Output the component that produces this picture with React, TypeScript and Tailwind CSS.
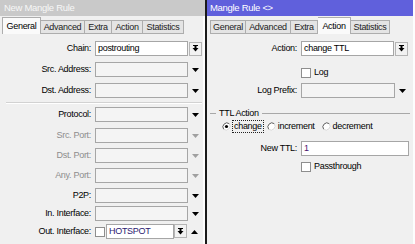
import React from 'react';

const TEXT = "font-['Liberation_Sans',Arial,sans-serif] text-[9px] tracking-[-0.3px] leading-none";

type Tab = { name: string; w: number };

const LEFT_TABS: Tab[] = [
  { name: 'General', w: 39 },
  { name: 'Advanced', w: 44 },
  { name: 'Extra', w: 27 },
  { name: 'Action', w: 31 },
  { name: 'Statistics', w: 41 },
];

const RIGHT_TABS: Tab[] = [
  { name: 'General', w: 36 },
  { name: 'Advanced', w: 45 },
  { name: 'Extra', w: 27 },
  { name: 'Action', w: 33 },
  { name: 'Statistics', w: 39 },
];

const Tabs: React.FC<{ tabs: Tab[]; active: string; left: number }> = ({ tabs, active, left }) => (
  <div className="flex items-end h-[18px]" style={{ paddingLeft: left }}>
    {tabs.map((t, i) => {
      const on = t.name === active;
      return (
        <div
          key={t.name}
          style={{ width: t.w }}
          className={`flex items-center justify-center border-t border-r border-[#adadad] ${i === 0 ? 'border-l' : ''} ${
            on ? 'h-[17px] bg-[#fafafa] text-black' : 'h-[14px] bg-[#e4e4e4] border-b text-[#222]'
          }`}
        >
          {t.name}
        </div>
      );
    })}
  </div>
);

// combo button: bar above a down arrow
const DropBtn = () => (
  <div className="w-[13px] h-[14px] border border-[#b5b5b5] bg-[#f2f2f2] flex items-center justify-center">
    <svg width="7" height="7" viewBox="0 0 7 7">
      <rect x="1" y="0" width="5" height="1" fill="#000" />
      <rect x="2.5" y="1" width="2" height="2" fill="#000" />
      <path d="M0.5 3h6L3.5 6.5z" fill="#000" />
    </svg>
  </div>
);

const Tri: React.FC<{ up?: boolean; gray?: boolean }> = ({ up, gray }) => (
  <svg width="7" height="4" viewBox="0 0 7 4">
    <path d={up ? 'M0 4h7L3.5 0z' : 'M0 0h7L3.5 4z'} fill={gray ? '#a0a0a0' : '#000'} />
  </svg>
);

const Check = () => <div className="w-[10px] h-[10px] border border-[#8e8e8e] bg-white shrink-0" />;

const Radio: React.FC<{ on?: boolean }> = ({ on }) => (
  <svg width="9" height="9" viewBox="0 0 9 9" className="shrink-0">
    <circle cx="4.5" cy="4.5" r="4" fill="#fff" />
    <path d="M1.7 7.3A4 4 0 0 1 7.3 1.7" stroke="#5a5a5a" fill="none" />
    <path d="M7.3 1.7A4 4 0 0 1 1.7 7.3" stroke="#d6d6d6" fill="none" />
    {on && <circle cx="4.5" cy="4.5" r="1.6" fill="#000" />}
  </svg>
);

const Field: React.FC<{ w: number; value?: string; white?: boolean; color?: string }> = ({ w, value, white, color }) => (
  <div
    style={{ width: w, color }}
    className={`h-[15px] border border-[#a6a6a6] flex items-center px-[2px] ${white ? 'bg-white' : 'bg-[#f4f4f4]'}`}
  >
    {value}
  </div>
);

const LRow: React.FC<{ label: string; gray?: boolean; children: React.ReactNode; mt: string }> = ({ label, gray, children, mt }) => (
  <div className={`flex items-center h-[15px] ${mt}`}>
    <div className={`w-[95px] pr-[4px] text-right ${gray ? 'text-[#8d8d8d]' : 'text-black'}`}>{label}</div>
    {children}
  </div>
);

const RRow: React.FC<{ label?: string; children: React.ReactNode; mt: string }> = ({ label, children, mt }) => (
  <div className={`flex items-center h-[15px] ${mt}`}>
    <div className="w-[94px] pr-[4px] text-right text-black">{label}</div>
    {children}
  </div>
);

const TriSlot: React.FC<{ up?: boolean; gray?: boolean }> = ({ up, gray }) => (
  <div className="w-[15px] flex justify-center">
    <Tri up={up} gray={gray} />
  </div>
);

export default function App() {
  return (
    <div className={`${TEXT} w-[415px] h-[244px] flex bg-[#f0f0f0] overflow-hidden select-none`}>
      {/* left window */}
      <div className="w-[205px] flex flex-col">
        <div className="h-[16px] bg-[#c9c9c9] text-[#f7f7f7] flex items-center pl-[4px] text-[9.5px]">New Mangle Rule</div>
        <div className="flex-1 flex flex-col border-r-2 border-[#fdfdfd]">
          <Tabs tabs={LEFT_TABS} active="General" left={2} />
          <LRow label="Chain:" mt="mt-[7px]">
            <Field w={93} value="postrouting" white />
            <div className="ml-[1px]"><DropBtn /></div>
          </LRow>
          <LRow label="Src. Address:" mt="mt-[6px]">
            <Field w={93} />
            <TriSlot />
          </LRow>
          <LRow label="Dst. Address:" mt="mt-[6px]">
            <Field w={93} />
            <TriSlot />
          </LRow>
          <div className="mt-[4px] ml-[6px] mr-[1px] h-[2px] border-t border-[#d2d2d2] border-b border-b-white" />
          <LRow label="Protocol:" mt="mt-[3px]">
            <Field w={93} />
            <TriSlot />
          </LRow>
          <LRow label="Src. Port:" gray mt="mt-[6px]">
            <Field w={93} />
            <TriSlot gray />
          </LRow>
          <LRow label="Dst. Port:" gray mt="mt-[5px]">
            <Field w={93} />
            <TriSlot gray />
          </LRow>
          <LRow label="Any. Port:" gray mt="mt-[5px]">
            <Field w={93} />
            <TriSlot gray />
          </LRow>
          <LRow label="P2P:" mt="mt-[5px]">
            <Field w={93} />
            <TriSlot />
          </LRow>
          <LRow label="In. Interface:" mt="mt-[3px]">
            <Field w={93} />
            <TriSlot />
          </LRow>
          <LRow label="Out. Interface:" mt="mt-[3px]">
            <Check />
            <div className="ml-[1px] flex">
              <Field w={68} value="HOTSPOT" white color="#2a1870" />
              <DropBtn />
            </div>
            <TriSlot up />
          </LRow>
        </div>
      </div>

      {/* divider */}
      <div className="w-[2px] bg-[#1a1a1a]" />

      {/* right window */}
      <div className="flex-1 flex flex-col border-r-2 border-[#fdfdfd]">
        <div className="h-[16px] bg-[#6060dc] text-white flex items-center pl-[3px] text-[9.5px]">Mangle Rule &lt;&gt;</div>
        <Tabs tabs={RIGHT_TABS} active="Action" left={3} />
        <RRow label="Action:" mt="mt-[7px]">
          <Field w={93} value="change TTL" white />
          <div className="ml-[1px]"><DropBtn /></div>
        </RRow>
        <RRow mt="mt-[9px]">
          <Check />
          <span className="ml-[3px]">Log</span>
        </RRow>
        <RRow label="Log Prefix:" mt="mt-[3px]">
          <Field w={94} />
          <TriSlot />
        </RRow>
        <div className="mt-[10px] flex items-center h-[10px] pl-[3px] pr-[3px]">
          <div className="w-[6px] border-t border-[#a8a8a8]" />
          <span className="px-[3px]">TTL Action</span>
          <div className="flex-1 border-t border-[#a8a8a8]" />
        </div>
        <div className="mt-[2px] flex items-center h-[12px] pl-[15px]">
          <Radio on />
          <span className="ml-[1px] px-[1px] py-[1px] border border-dotted border-[#222]">change</span>
          <div className="ml-[3px]"><Radio /></div>
          <span className="ml-[2px]">increment</span>
          <div className="ml-[7px]"><Radio /></div>
          <span className="ml-[2px]">decrement</span>
        </div>
        <RRow label="New TTL:" mt="mt-[9px]">
          <Field w={108} value="1" white color="#4a1470" />
        </RRow>
        <RRow mt="mt-[3px]">
          <Check />
          <span className="ml-[3px]">Passthrough</span>
        </RRow>
      </div>
    </div>
  );
}
